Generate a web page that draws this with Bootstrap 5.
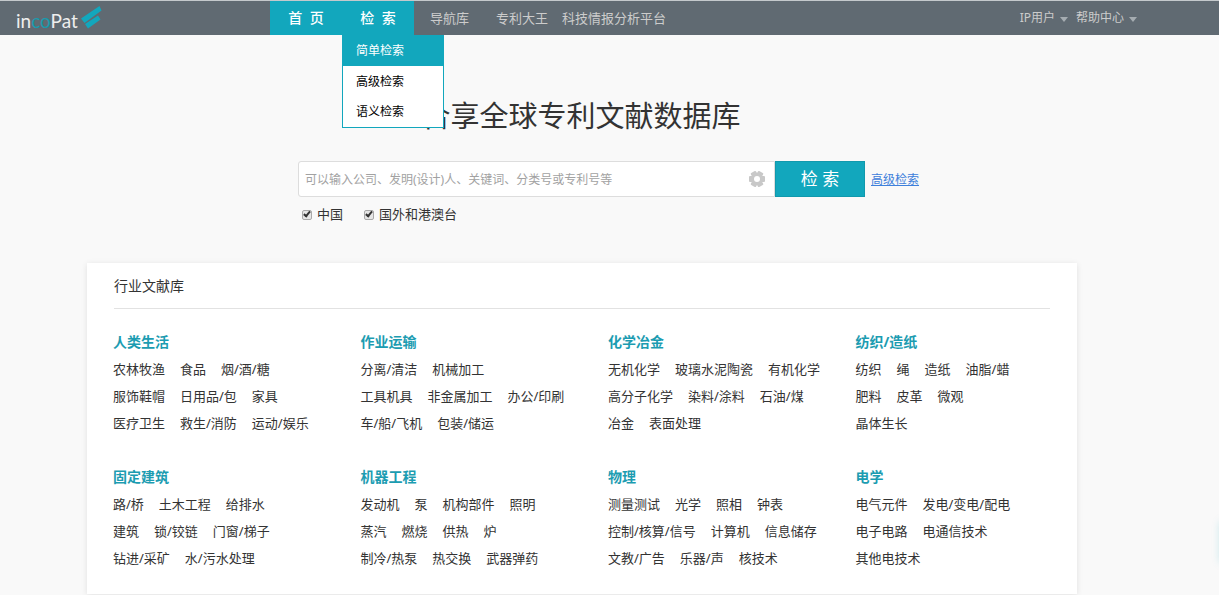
<!DOCTYPE html>
<html lang="zh-CN">
<head>
<meta charset="utf-8">
<meta name="viewport" content="width=device-width, initial-scale=1">
<title>incoPat</title>
<link href="https://cdn.jsdelivr.net/npm/bootstrap@5.3.0/dist/css/bootstrap.min.css" rel="stylesheet">
<style>
:root { --teal: #12a7bd; --slate: #606a72; }
body { background: #f9f9f9; color: #333; font: 13px/27px "Noto Sans", "Noto Sans CJK SC", sans-serif; overflow-x: hidden; }
a { color: inherit; text-decoration: none; }
.topbar { background: var(--slate); border-top: 1px solid #c4c9cc; height: 35px; color: #ccc; line-height: 34px; padding-right: 82px; }
.logo { width: 270px; padding-left: 16px; }
.logo-text { font-family: Lato, sans-serif; font-size: 19px; line-height: 34px; color: #eee; padding-top: 3px; }
.logo-text b { font-weight: 400; color: #199bae; }
.logo svg { margin: 5px 0 0 3px; }
.tab { width: 72px; background: var(--teal); color: #fff; font-size: 14px; font-weight: 500; text-align: center; display: block; }
.plain-links { padding-left: 16px; }
.plain-links li + li { margin-left: 27px; }
.plain-links li:last-child { margin-left: 14px; }
.user-links { gap: 8px; font-size: 12px; }
.user-links button { background: none; border: 0; padding: 0; color: inherit; line-height: 34px; display: flex; align-items: center; gap: 5px; }
.user-links button::after { content: ""; border: 4px solid transparent; border-top: 5px solid #a5acb1; border-bottom: 0; margin-top: 2px; }
.dropdown-menu.sub { display: block; top: 34px; left: 0; min-width: 102px; padding: 0; margin: 0; border: 1px solid var(--teal); border-top: 0; border-radius: 0; font-size: 12px; }
.sub .dropdown-item { padding: 0 13px; line-height: 30px; color: #000; }
.sub .dropdown-item.active { background: var(--teal); color: #fff; padding-top: 1px; margin-bottom: 1px; }
.page { padding: 0 142px 1px 87px; }
.slogan { font-size: 29px; font-weight: 400; line-height: 40px; margin: 61px 2px 0 0; text-align: center; }
.finder { padding-left: 211px; margin-top: 25px; }
.query { width: 477px; }
.query .form-control { height: 36px; border: 1px solid #ddd; border-radius: 3px 0 0 3px; padding: 0 40px 0 6px; font-size: 12px; color: #333; }
.query .form-control::placeholder { color: #a2a2a2; }
.gear { position: absolute; right: 9px; top: 9px; width: 18px; height: 18px; border: 0; padding: 0; background: none; display: flex; }
.go { width: 90px; height: 36px; border: 1px solid #1199ad; border-radius: 0; background: var(--teal); color: #fff; font-size: 17px; line-height: 34px; padding: 0; }
.go:hover { background: #1199ad; color: #fff; }
.adv { color: #3e80db; font-size: 12px; text-decoration: underline; margin-left: 6px; }
.scope { padding-left: 215px; gap: 21px; margin-top: 4px; }
.scope label { display: flex; align-items: center; gap: 5px; }
.scope input { appearance: none; width: 10px; height: 10px; margin: 0; border: 1px solid #a9a9a9; border-radius: 2px; background: #e6e6e6; display: grid; place-items: center; }
.scope input:checked::after { content: ""; width: 4px; height: 7px; border: solid #333; border-width: 0 2px 2px 0; transform: rotate(40deg); margin-top: -2px; }
.library { background: #fff; margin-top: 35px; box-shadow: 0 1px 6px rgba(0,0,0,.1); padding-bottom: 22px; }
.library h2 { font-size: 14px; font-weight: 400; line-height: 45px; margin: 0 27px 19px; border-bottom: 1px solid #e2e2e2; }
.topic { padding-left: 26px; white-space: nowrap; }
.topic h3 { font-size: 14px; line-height: 27px; font-weight: 700; color: #1c9cb1; margin: 0 0 1px; }
.topic div { display: flex; gap: 15px; }
.topics { row-gap: 26px; }
.edge-tab { position: fixed; right: -6px; top: 522px; width: 4px; height: 40px; box-shadow: 0 0 8px rgba(18,167,189,.35); }
</style>
</head>
<body>
<header class="topbar d-flex">
  <a class="logo d-flex flex-shrink-0" href="#"><span class="logo-text">in<b>co</b>Pat</span>
    <svg width="22" height="24" viewBox="0 0 22 24" aria-hidden="true"><path d="M0 12.500 18.500 0 20.500 4.500 3.500 17zM4 18 17 9.500 19.500 13.500 7 22.500z" fill="#12a7bd"/></svg>
  </a>
  <nav class="d-flex flex-grow-1">
    <a class="tab" href="#">首&nbsp; 页</a>
    <div class="position-relative">
      <a class="tab" href="#">检&nbsp; 索</a>
      <div class="dropdown-menu sub">
        <a class="dropdown-item active" href="#">简单检索</a>
        <a class="dropdown-item" href="#">高级检索</a>
        <a class="dropdown-item" href="#">语义检索</a>
      </div>
    </div>
    <ul class="plain-links list-unstyled d-flex mb-0">
      <li><a href="#">导航库</a></li>
      <li><a href="#">专利大王</a></li>
      <li><a href="#">科技情报分析平台</a></li>
    </ul>
  </nav>
  <div class="user-links d-flex flex-shrink-0">
    <button type="button">IP用户</button>
    <button type="button">帮助中心</button>
  </div>
</header>
<main class="page">
  <h1 class="slogan">合享全球专利文献数据库</h1>
  <form>
    <div class="finder d-flex align-items-center">
      <div class="query position-relative">
        <input class="form-control" type="text" aria-label="检索" placeholder="可以输入公司、发明(设计)人、关键词、分类号或专利号等">
        <button class="gear" type="button" aria-label="设置">
          <svg width="18" height="18" viewBox="0 0 18 18"><g fill="#c8c8c8"><rect x="6" y="1" width="6" height="16" rx="1" transform="rotate(30 9 9)"/><rect x="6" y="1" width="6" height="16" rx="1" transform="rotate(90 9 9)"/><rect x="6" y="1" width="6" height="16" rx="1" transform="rotate(150 9 9)"/></g><circle cx="9" cy="9" r="3" fill="#fff"/></svg>
        </button>
      </div>
      <button class="btn go" type="button">检 索</button>
      <a class="adv" href="#">高级检索</a>
    </div>
    <div class="scope d-flex">
      <label><input type="checkbox" checked>中国</label>
      <label><input type="checkbox" checked>国外和港澳台</label>
    </div>
  </form>
  <section class="library">
    <h2>行业文献库</h2>
    <div class="topics row g-0">
      <div class="col-3 topic"><h3>人类生活</h3>
        <div><a href="#">农林牧渔</a><a href="#">食品</a><a href="#">烟/酒/糖</a></div>
        <div><a href="#">服饰鞋帽</a><a href="#">日用品/包</a><a href="#">家具</a></div>
        <div><a href="#">医疗卫生</a><a href="#">救生/消防</a><a href="#">运动/娱乐</a></div></div>
      <div class="col-3 topic"><h3>作业运输</h3>
        <div><a href="#">分离/清洁</a><a href="#">机械加工</a></div>
        <div><a href="#">工具机具</a><a href="#">非金属加工</a><a href="#">办公/印刷</a></div>
        <div><a href="#">车/船/飞机</a><a href="#">包装/储运</a></div></div>
      <div class="col-3 topic"><h3>化学冶金</h3>
        <div><a href="#">无机化学</a><a href="#">玻璃水泥陶瓷</a><a href="#">有机化学</a></div>
        <div><a href="#">高分子化学</a><a href="#">染料/涂料</a><a href="#">石油/煤</a></div>
        <div><a href="#">冶金</a><a href="#">表面处理</a></div></div>
      <div class="col-3 topic"><h3>纺织/造纸</h3>
        <div><a href="#">纺织</a><a href="#">绳</a><a href="#">造纸</a><a href="#">油脂/蜡</a></div>
        <div><a href="#">肥料</a><a href="#">皮革</a><a href="#">微观</a></div>
        <div><a href="#">晶体生长</a></div></div>
      <div class="col-3 topic"><h3>固定建筑</h3>
        <div><a href="#">路/桥</a><a href="#">土木工程</a><a href="#">给排水</a></div>
        <div><a href="#">建筑</a><a href="#">锁/铰链</a><a href="#">门窗/梯子</a></div>
        <div><a href="#">钻进/采矿</a><a href="#">水/污水处理</a></div></div>
      <div class="col-3 topic"><h3>机器工程</h3>
        <div><a href="#">发动机</a><a href="#">泵</a><a href="#">机构部件</a><a href="#">照明</a></div>
        <div><a href="#">蒸汽</a><a href="#">燃烧</a><a href="#">供热</a><a href="#">炉</a></div>
        <div><a href="#">制冷/热泵</a><a href="#">热交换</a><a href="#">武器弹药</a></div></div>
      <div class="col-3 topic"><h3>物理</h3>
        <div><a href="#">测量测试</a><a href="#">光学</a><a href="#">照相</a><a href="#">钟表</a></div>
        <div><a href="#">控制/核算/信号</a><a href="#">计算机</a><a href="#">信息储存</a></div>
        <div><a href="#">文教/广告</a><a href="#">乐器/声</a><a href="#">核技术</a></div></div>
      <div class="col-3 topic"><h3>电学</h3>
        <div><a href="#">电气元件</a><a href="#">发电/变电/配电</a></div>
        <div><a href="#">电子电路</a><a href="#">电通信技术</a></div>
        <div><a href="#">其他电技术</a></div></div>
    </div>
  </section>
</main>
<aside class="edge-tab"></aside>
<script src="https://cdn.jsdelivr.net/npm/bootstrap@5.3.0/dist/js/bootstrap.bundle.min.js"></script>
</body>
</html>
